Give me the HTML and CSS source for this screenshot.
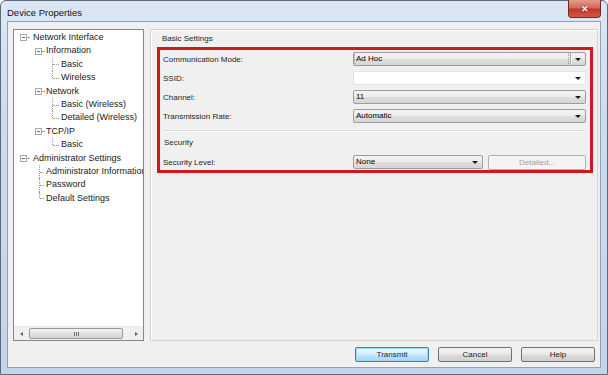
FILE: index.html
```html
<!DOCTYPE html>
<html lang="en">
<head>
    <meta charset="UTF-8">
    <meta name="viewport" content="width=device-width, initial-scale=1.0">
    <title>Device Properties</title>
    <link rel="stylesheet" href="styles.css">
</head>
<body>
    <div class="window">
        <!-- Title Bar -->
        <div class="titlebar">
            <span class="title">Device Properties</span>
            <button class="close-btn">&#x2715;</button>
        </div>

        <div class="client">
            <div class="panels">
                <!-- Tree Panel -->
                <div class="tree-panel">
                    <div class="tree">
                        <div class="row l0"><span class="exp"></span><span class="dash"></span><span class="label">Network Interface</span></div>
                        <div class="row l1"><span class="exp"></span><span class="dash"></span><span class="label">Information</span></div>
                        <div class="row l2"><span class="stub tee"></span><span class="label">Basic</span></div>
                        <div class="row l2"><span class="stub end"></span><span class="label">Wireless</span></div>
                        <div class="row l1"><span class="exp"></span><span class="dash"></span><span class="label">Network</span></div>
                        <div class="row l2"><span class="stub tee"></span><span class="label">Basic (Wireless)</span></div>
                        <div class="row l2"><span class="stub end"></span><span class="label">Detailed (Wireless)</span></div>
                        <div class="row l1"><span class="exp"></span><span class="dash"></span><span class="label">TCP/IP</span></div>
                        <div class="row l2"><span class="stub end"></span><span class="label">Basic</span></div>
                        <div class="row l0"><span class="exp"></span><span class="dash"></span><span class="label">Administrator Settings</span></div>
                        <div class="row l1 leaf"><span class="stub tee"></span><span class="label">Administrator Information</span></div>
                        <div class="row l1 leaf"><span class="stub tee"></span><span class="label">Password</span></div>
                        <div class="row l1 leaf"><span class="stub end"></span><span class="label">Default Settings</span></div>
                    </div>
                    <div class="hscroll">
                        <span class="arrow left"></span>
                        <span class="track"><span class="thumb"><span class="grip"></span></span></span>
                        <span class="arrow right"></span>
                    </div>
                </div>

                <!-- Settings Panel -->
                <div class="settings-panel">
                    <div class="group-title">Basic Settings</div>
                    <div class="highlight">
                        <div class="field">
                            <label>Communication Mode:</label>
                            <div class="combo split focused"><span class="value">Ad Hoc</span><span class="drop"></span></div>
                        </div>
                        <div class="field">
                            <label>SSID:</label>
                            <div class="combo edit"><span class="value"></span><span class="drop"></span></div>
                        </div>
                        <div class="field">
                            <label>Channel:</label>
                            <div class="combo"><span class="value">11</span><span class="drop"></span></div>
                        </div>
                        <div class="field">
                            <label>Transmission Rate:</label>
                            <div class="combo"><span class="value">Automatic</span><span class="drop"></span></div>
                        </div>
                        <div class="separator"></div>
                        <div class="group-title sub">Security</div>
                        <div class="field">
                            <label>Security Level:</label>
                            <div class="combo short"><span class="value">None</span><span class="drop"></span></div>
                            <button class="btn detailed" disabled>Detailed...</button>
                        </div>
                    </div>
                </div>
            </div>

            <!-- Dialog Buttons -->
            <div class="actions">
                <button class="btn default">Transmit</button>
                <button class="btn">Cancel</button>
                <button class="btn">Help</button>
            </div>
        </div>
    </div>
</body>
</html>
```

FILE: styles.css
```css
/* Global Styles */
body {
    margin: 0;
    padding: 0;
    font-family: 'Liberation Sans', Arial, sans-serif;
    color: #000;
    background-color: #fff;
}

/* Window Frame */
.window {
    width: 608px;
    height: 375px;
    box-sizing: border-box;
    display: flex;
    flex-direction: column;
    background: linear-gradient(to bottom, #dce7f3 0%, #cddcee 30%, #c3d5ea 100%);
    border: 1px solid #5a6b80;
    border-radius: 6px 6px 0 0;
}

.titlebar {
    height: 20px;
    display: flex;
    align-items: center;
    justify-content: space-between;
    padding-left: 6px;
}

.title {
    font-size: 9.5px;
    color: #111;
    margin-top: 2px;
}

.close-btn {
    width: 33px;
    height: 18px;
    align-self: flex-start;
    margin-right: 6px;
    margin-top: -1px;
    border: 1px solid #6d2a2a;
    border-top: none;
    border-radius: 0 0 4px 4px;
    background: linear-gradient(to bottom, #e49a8c 0%, #d46a5a 45%, #c1372a 55%, #d15a45 100%);
    color: #fff;
    font-size: 9px;
    font-weight: bold;
    padding: 0;
    line-height: 16px;
    text-shadow: 0 0 2px #5a1010;
}

/* Client Area */
.client {
    flex: 1;
    margin: 0 6px 6px 6px;
    background-color: #f0f0f0;
    border: 1px solid #8fa2b8;
    display: flex;
    flex-direction: column;
    padding: 7px 3px 0 5px;
}

.panels {
    display: flex;
    gap: 6px;
    height: 312px;
}

/* Tree Panel */
.tree-panel {
    width: 129px;
    flex: none;
    border: 1px solid #828790;
    background-color: #fff;
    display: flex;
    flex-direction: column;
    overflow: hidden;
}

.tree {
    flex: 1;
    padding-top: 1px;
    font-size: 9px;
    color: #1a1a1a;
    white-space: nowrap;
    overflow: hidden;
}

.row {
    display: flex;
    align-items: stretch;
    height: 13.4px;
}

.row .label {
    line-height: 13.4px;
}

.row.l0 { padding-left: 6px; }
.row.l1 { padding-left: 21px; }
.row.l2 { padding-left: 38px; }
.row.l1.leaf { padding-left: 25px; }

/* Expander box with minus sign */
.exp {
    width: 7px;
    height: 7px;
    flex: none;
    align-self: center;
    border: 1px solid #a8a8a8;
    box-sizing: border-box;
    background: linear-gradient(#666, #666) center / 3px 1px no-repeat, #fff;
}

.dash {
    width: 3px;
    flex: none;
    margin-right: 3px;
    background: linear-gradient(#a0a0a0, #a0a0a0) 0 50% / 100% 1px no-repeat;
}

.row.l1 .dash {
    width: 3px;
    margin-right: 1px;
}

/* Connector stubs for leaf items */
.stub {
    width: 7px;
    flex: none;
    margin-right: 2px;
    position: relative;
}

.row.l1.leaf .stub {
    width: 5px;
}

.stub::before {
    content: "";
    position: absolute;
    left: 0;
    top: 0;
    bottom: 0;
    border-left: 1px dotted #9a9a9a;
}

.stub.end::before {
    bottom: 50%;
}

.stub::after {
    content: "";
    position: absolute;
    left: 1px;
    right: 0;
    top: 50%;
    border-top: 1px dotted #9a9a9a;
}

/* Horizontal Scrollbar */
.hscroll {
    height: 13px;
    display: flex;
    align-items: stretch;
    background-color: #f0f0f0;
    border-top: 1px solid #e8e8e8;
}

.arrow {
    width: 14px;
    flex: none;
    display: flex;
    align-items: center;
    justify-content: center;
}

.arrow.left::after {
    content: "";
    border-style: solid;
    border-width: 2px 3px 2px 0;
    border-color: transparent #606060 transparent transparent;
}

.arrow.right::after {
    content: "";
    border-style: solid;
    border-width: 2px 0 2px 3px;
    border-color: transparent transparent transparent #606060;
}

.track {
    flex: 1;
    display: flex;
    padding: 1px 6px 1px 1px;
}

.thumb {
    flex: 1;
    border: 1px solid #979797;
    border-radius: 2px;
    background: linear-gradient(to bottom, #f3f3f3 0%, #e2e2e2 50%, #d4d4d4 100%);
    display: flex;
    align-items: center;
    justify-content: center;
}

.grip {
    width: 5px;
    height: 4px;
    background: repeating-linear-gradient(to right, #707070 0 1px, transparent 1px 2px);
}

/* Settings Panel */
.settings-panel {
    flex: 1;
    border: 1px solid #d5d5d5;
    box-shadow: inset 1px 1px 0 #fff;
    padding: 1px 4px 0 6px;
    font-size: 8px;
}

.group-title {
    height: 16px;
    line-height: 16px;
    padding-left: 5px;
    color: #1e1e1e;
}

.highlight {
    border: 3px solid #cc1a22;
    padding: 2px 4px 1px 3px;
    display: flex;
    flex-direction: column;
    gap: 5px;
}

.field {
    display: flex;
    align-items: center;
    height: 14px;
}

.field label {
    width: 190px;
    flex: none;
    color: #1e1e1e;
}

.combo {
    flex: 1;
    height: 14px;
    box-sizing: border-box;
    border: 1px solid #9d9d9d;
    border-radius: 2px;
    background: linear-gradient(to bottom, #f4f4f4 0%, #ececec 48%, #dedede 52%, #d6d6d6 100%);
    display: flex;
    align-items: center;
}

.combo .value {
    flex: 1;
    padding-left: 2px;
    line-height: 12px;
}

.combo .drop {
    width: 14px;
    height: 100%;
    flex: none;
    display: flex;
    align-items: center;
    justify-content: center;
}

.combo .drop::after {
    content: "";
    border-style: solid;
    border-width: 3px 3px 0 3px;
    border-color: #1a1a1a transparent transparent transparent;
}

.combo.split .drop {
    border-left: 1px solid #a8a8a8;
    box-shadow: inset 1px 0 0 #fafafa;
}

.combo.focused .value {
    margin: 1px 2px 1px 1px;
    padding-left: 1px;
    outline: 1px dotted #9a9a9a;
}

.combo.edit {
    background: #fff;
    border-color: #e2e3ea;
}

.combo.short {
    flex: none;
    width: 130px;
}

.separator {
    height: 0;
    border-top: 1px solid #dadada;
    border-bottom: 1px solid #fff;
    margin: 2px 0 -2px 0;
}

.group-title.sub {
    padding-left: 1px;
    margin-bottom: -1px;
}

/* Button Styles */
.btn {
    font-family: 'Liberation Sans', Arial, sans-serif;
    font-size: 8px;
    height: 15px;
    width: 74px;
    padding: 0;
    border: 1px solid #707070;
    border-radius: 2px;
    background: linear-gradient(to bottom, #f2f2f2 0%, #ebebeb 48%, #dddddd 52%, #cfcfcf 100%);
    color: #1e1e1e;
}

.btn.default {
    border-color: #3c7fb1;
    box-shadow: inset 0 0 0 1px #9fd8f5;
    background: linear-gradient(to bottom, #eaf6fd 0%, #d9f0fc 48%, #bee6fd 52%, #a7d9f5 100%);
}

.btn.detailed {
    flex: none;
    width: 98px;
    margin-left: 5px;
    background: #f4f4f4;
    border-color: #adb2b5;
    color: #a0a0a0;
}

/* Dialog Buttons */
.actions {
    display: flex;
    justify-content: flex-end;
    gap: 9px;
    padding: 6px 2px 0 0;
}
```
